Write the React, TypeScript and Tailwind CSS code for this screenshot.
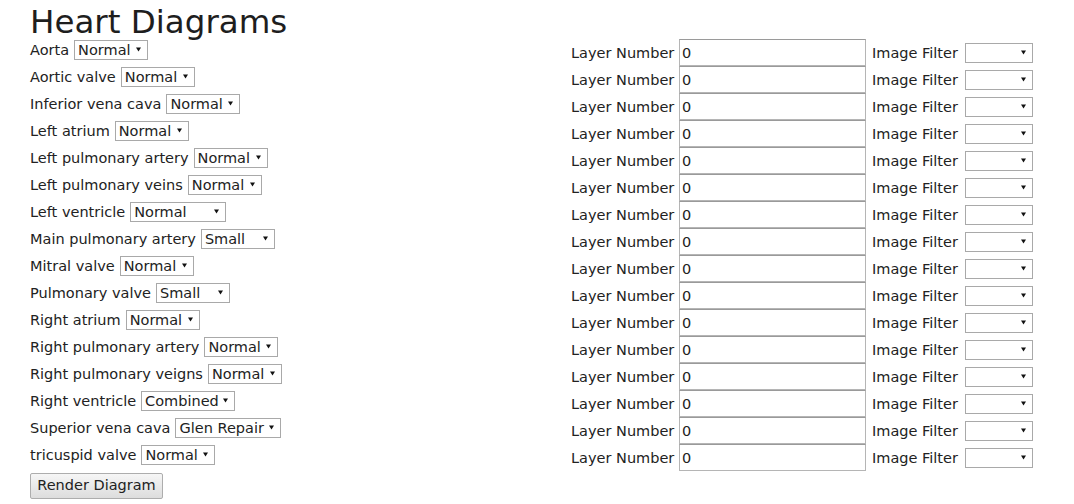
import React from "react";

const parts: [string, string, number][] = [
  ["Aorta", "Normal", 74],
  ["Aortic valve", "Normal", 74],
  ["Inferior vena cava", "Normal", 74],
  ["Left atrium", "Normal", 74],
  ["Left pulmonary artery", "Normal", 74],
  ["Left pulmonary veins", "Normal", 74],
  ["Left ventricle", "Normal", 96],
  ["Main pulmonary artery", "Small", 74],
  ["Mitral valve", "Normal", 74],
  ["Pulmonary valve", "Small", 74],
  ["Right atrium", "Normal", 74],
  ["Right pulmonary artery", "Normal", 74],
  ["Right pulmonary veigns", "Normal", 74],
  ["Right ventricle", "Combined", 94],
  ["Superior vena cava", "Glen Repair", 106],
  ["tricuspid valve", "Normal", 74],
];

const Arrow = () => (
  <svg width="5" height="5" viewBox="0 0 5 5" className="absolute right-[7px] top-[7px] pointer-events-none">
    <path d="M0 0.5 L5 0.5 L2.5 4.5 Z" fill="#111" />
  </svg>
);

const Select = ({ value, width }: { value: string; width: number }) => (
  <span className="relative inline-flex" style={{ width }}>
    <select
      defaultValue={value}
      className="appearance-none w-full h-[20px] border border-[#a9a9a9] bg-white pl-[3px] pr-[14px] text-[14.5px] leading-[18px] text-[#222] rounded-none outline-none"
    >
      {value && <option>{value}</option>}
    </select>
    <Arrow />
  </span>
);

export default function App() {
  return (
    <div className="bg-white min-h-screen text-[#222] font-['DejaVu_Sans',Verdana,sans-serif] text-[14.5px]">
      <h1 className="text-[32.5px] leading-[28px] pt-[8px] h-[36px] pl-[30px] font-normal text-[#1e1e1e]">Heart Diagrams</h1>
      <div className="flex">
        <div className="w-[571px] pl-[30px] flex flex-col">
          {parts.map(([label, value, w]) => (
            <div key={label} className="h-[27px] flex items-center gap-[5px]">
              <span className="leading-[20px]">{label}</span>
              <Select value={value} width={w} />
            </div>
          ))}
          <div className="mt-[5px]">
            <button className="h-[26px] w-[133px] border border-[#adadad] rounded-[2px] bg-gradient-to-b from-[#f6f6f6] to-[#dddddd] text-[14.5px] text-[#222]">
              Render Diagram
            </button>
          </div>
        </div>
        <div className="flex flex-col pt-[3px]">
          {parts.map(([label]) => (
            <div key={label} className="h-[27px] flex items-center">
              <span className="w-[108px] leading-[20px]">Layer Number</span>
              <input
                defaultValue="0"
                className="w-[187px] h-[27px] border border-[#b5b5b5] border-t-[#9a9a9a] px-[2px] text-[14.5px] text-[#222] outline-none"
              />
              <span className="ml-[6px] w-[93px] leading-[20px]">Image Filter</span>
              <Select value="" width={68} />
            </div>
          ))}
        </div>
      </div>
    </div>
  );
}
